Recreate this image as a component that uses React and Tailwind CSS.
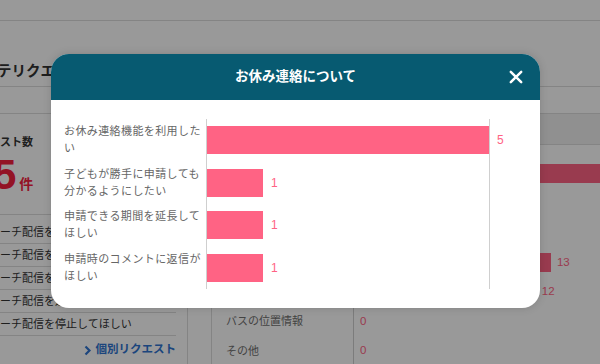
import React from 'react';

const reasons = [
  { lines: ['お休み連絡機能を利用した', 'い'], value: 5 },
  { lines: ['子どもが勝手に申請しても', '分かるようにしたい'], value: 1 },
  { lines: ['申請できる期間を延長して', 'ほしい'], value: 1 },
  { lines: ['申請時のコメントに返信が', 'ほしい'], value: 1 },
];

const requests = [
  { label: 'お休み連絡について', value: 22 },
  { label: '欠席・遅刻の連絡', value: 6 },
  { label: 'アンケート機能', value: 9 },
  { label: '連絡網の配信', value: 13 },
  { label: '配信予約について', value: 12 },
  { label: 'バスの位置情報', value: 0 },
  { label: 'その他', value: 0 },
];

const leftRows = [
  'リーチ配信を増やしてほしい',
  'リーチ配信を週一回にしてほしい',
  'リーチ配信を時間指定したい',
  'リーチ配信を選択制にしたい',
  'リーチ配信を停止してほしい',
];

const App = () => {
  return (
    <div className="relative w-[600px] h-[364px] overflow-hidden bg-white font-['Liberation_Sans','Noto_Sans_CJK_JP',sans-serif]">
      {/* page behind the dialog */}
      <header className="h-[21px] border-b border-[#dcdcdc]" />
      <div className="h-[66px] border-b border-[#dcdcdc] pt-[40px]">
        <h1 className="-ml-[3px] text-[14.5px] font-bold leading-[20px] text-[#333] whitespace-nowrap">テリクエスト一覧</h1>
      </div>
      <div className="h-[27px] border-b border-[#dcdcdc]" />

      <div className="flex w-[700px] -ml-[40px] h-[260px]">
        {/* left card */}
        <div className="w-[228px] shrink-0 border-r border-[#dcdcdc] pl-[18px] pr-[11px]">
          <div className="pt-[20px] -ml-[11px] text-[11px] font-bold leading-[16px] text-[#333] whitespace-nowrap">リクエスト数</div>
          <div className="mt-[4px] h-[42px] flex items-baseline text-[#f5213f] font-bold">
            <span className="ml-[15px] text-[42px] leading-none">5</span>
            <span className="ml-[3px] text-[14px] leading-none">件</span>
          </div>
          <div className="mt-[18px] border-t border-[#dcdcdc] pt-[6px]">
            {leftRows.map((row) => (
              <div key={row} className="h-[23px] flex items-center border-b border-[#dcdcdc] text-[11px] text-[#333] whitespace-nowrap">
                <span className="ml-[11px]">{row}</span>
              </div>
            ))}
            <div className="h-[28px] flex items-center justify-end gap-[5px] text-[#2f74d0] font-bold text-[11.5px]">
              <svg width="7" height="11" viewBox="0 0 7 11">
                <path d="M1.5 1.5 L5.5 5.5 L1.5 9.5" fill="none" stroke="#2f74d0" strokeWidth="2.2" />
              </svg>
              <span>個別リクエスト</span>
            </div>
          </div>
        </div>

        {/* right card */}
        <div className="ml-[23px] flex-1 border-l border-[#dcdcdc]">
          <div className="h-[31px] bg-[#f0f0f0] border-b border-[#dcdcdc]" />
          <div className="pt-[14px]">
            {requests.map((r) => (
              <div key={r.label} className="h-[29.5px] flex">
                <div className="w-[141px] shrink-0 pl-[14px] flex items-center text-[11px] text-[#707070] whitespace-nowrap">{r.label}</div>
                <div className="flex-1 border-l border-[#cfcfcf] flex items-center gap-[6px]">
                  <div className="h-[19px] bg-[#ff6384] shrink-0" style={{ width: r.value * 15.15 }} />
                  <span className="text-[11.5px] text-[#ff6384] shrink-0">{r.value}</span>
                </div>
              </div>
            ))}
          </div>
        </div>
      </div>

      {/* overlay */}
      <div className="absolute inset-0 bg-black/40" />

      {/* dialog */}
      <div className="absolute left-[51px] top-[54px] w-[489px] h-[254px] rounded-[18px] overflow-hidden bg-white shadow-[0_0_8px_rgba(0,0,0,0.15)]">
        <div className="relative h-[46px] bg-[#075a71] flex items-center justify-center">
          <h2 className="text-[13.5px] font-bold text-white">お休み連絡について</h2>
          <button className="absolute right-[17px] top-1/2 -translate-y-1/2 w-[14px] h-[14px] flex items-center justify-center">
            <svg width="14" height="14" viewBox="0 0 14 14">
              <path d="M1.8 1.8 L12.2 12.2 M12.2 1.8 L1.8 12.2" stroke="white" strokeWidth="2.5" strokeLinecap="round" />
            </svg>
          </button>
        </div>

        <div className="flex pl-[13px] pt-[19px]">
          <div className="w-[142px] shrink-0">
            {reasons.map((r) => (
              <div key={r.lines[0]} className="h-[42.5px] flex flex-col justify-center text-[11px] leading-[17px] tracking-[0.4px] text-[#666] whitespace-nowrap">
                {r.lines.map((l) => (
                  <div key={l}>{l}</div>
                ))}
              </div>
            ))}
          </div>
          <div className="w-[284px] shrink-0 border-x border-[#cfcfcf]">
            {reasons.map((r) => (
              <div key={r.lines[0]} className="h-[42.5px] flex items-center gap-[8px]">
                <div className="h-[28px] bg-[#ff6384] shrink-0" style={{ width: Math.round(r.value * 56.4) }} />
                <span className="text-[12px] text-[#ff6384] shrink-0">{r.value}</span>
              </div>
            ))}
          </div>
        </div>
      </div>
    </div>
  );
};

export default App;
